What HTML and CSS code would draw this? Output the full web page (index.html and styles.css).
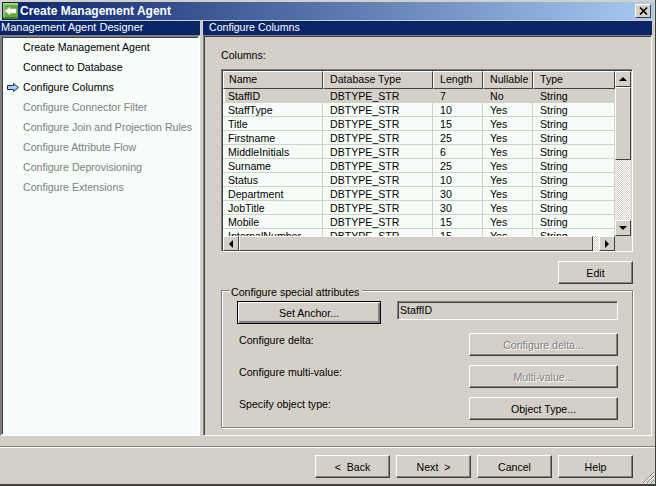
FILE: index.html
```html
<!DOCTYPE html>
<html lang="en">
<head>
    <meta charset="UTF-8">
    <title>Create Management Agent</title>
    <link rel="stylesheet" href="styles.css">
</head>
<body>
    <div class="window">
        <div class="titlebar">
            <svg class="app-icon" width="15" height="16" viewBox="0 0 15 16">
                <rect x="0" y="0" width="15" height="16" fill="#62a83f"/>
                <rect x="0" y="0" width="15" height="2" fill="#a3d585"/>
                <rect x="0" y="2" width="2" height="14" fill="#8cc76c"/>
                <rect x="0" y="14" width="15" height="2" fill="#3f8129"/>
                <path d="M2 8 L7 4 V6 H13 V10 H7 V12 Z" fill="#ffffff" stroke="#d5ecc8" stroke-width="0.5"/>
            </svg>
            <span class="title-text">Create Management Agent</span>
            <div class="close-btn">
                <svg width="9" height="8" viewBox="0 0 9 8"><path d="M1 0.5 L8 7.5 M8 0.5 L1 7.5" stroke="#000" stroke-width="1.6"/></svg>
            </div>
        </div>

        <div class="main">
            <div class="side">
                <div class="heading side-heading">Management Agent Designer</div>
                <ul class="steps">
                    <li>Create Management Agent</li>
                    <li>Connect to Database</li>
                    <li class="current">
                        <svg class="arrow" width="12" height="9" viewBox="0 0 12 9">
                            <path d="M0.5 2.5 H6.5 V0.5 L11.5 4.5 L6.5 8.5 V6.5 H0.5 Z" fill="#a9cdf2" stroke="#10305a" stroke-width="1"/>
                        </svg>
                        Configure Columns
                    </li>
                    <li class="off">Configure Connector Filter</li>
                    <li class="off">Configure Join and Projection Rules</li>
                    <li class="off">Configure Attribute Flow</li>
                    <li class="off">Configure Deprovisioning</li>
                    <li class="off">Configure Extensions</li>
                </ul>
            </div>

            <div class="content">
                <div class="heading content-heading">Configure Columns</div>
                <div class="page">
                    <div class="columns-label">Columns:</div>
                    <div class="list-frame">
                        <div class="list-top">
                            <div class="list-view">
                                <div class="row head">
                                    <div class="col-name">Name</div>
                                    <div class="col-db">Database Type</div>
                                    <div class="col-len">Length</div>
                                    <div class="col-null">Nullable</div>
                                    <div class="col-type">Type</div>
                                </div>
                                <div class="row selected"><div class="col-name">StaffID</div><div class="col-db">DBTYPE_STR</div><div class="col-len">7</div><div class="col-null">No</div><div class="col-type">String</div></div>
                                <div class="row"><div class="col-name">StaffType</div><div class="col-db">DBTYPE_STR</div><div class="col-len">10</div><div class="col-null">Yes</div><div class="col-type">String</div></div>
                                <div class="row"><div class="col-name">Title</div><div class="col-db">DBTYPE_STR</div><div class="col-len">15</div><div class="col-null">Yes</div><div class="col-type">String</div></div>
                                <div class="row"><div class="col-name">Firstname</div><div class="col-db">DBTYPE_STR</div><div class="col-len">25</div><div class="col-null">Yes</div><div class="col-type">String</div></div>
                                <div class="row"><div class="col-name">MiddleInitials</div><div class="col-db">DBTYPE_STR</div><div class="col-len">6</div><div class="col-null">Yes</div><div class="col-type">String</div></div>
                                <div class="row"><div class="col-name">Surname</div><div class="col-db">DBTYPE_STR</div><div class="col-len">25</div><div class="col-null">Yes</div><div class="col-type">String</div></div>
                                <div class="row"><div class="col-name">Status</div><div class="col-db">DBTYPE_STR</div><div class="col-len">10</div><div class="col-null">Yes</div><div class="col-type">String</div></div>
                                <div class="row"><div class="col-name">Department</div><div class="col-db">DBTYPE_STR</div><div class="col-len">30</div><div class="col-null">Yes</div><div class="col-type">String</div></div>
                                <div class="row"><div class="col-name">JobTitle</div><div class="col-db">DBTYPE_STR</div><div class="col-len">30</div><div class="col-null">Yes</div><div class="col-type">String</div></div>
                                <div class="row"><div class="col-name">Mobile</div><div class="col-db">DBTYPE_STR</div><div class="col-len">15</div><div class="col-null">Yes</div><div class="col-type">String</div></div>
                                <div class="row"><div class="col-name">InternalNumber</div><div class="col-db">DBTYPE_STR</div><div class="col-len">15</div><div class="col-null">Yes</div><div class="col-type">String</div></div>
                            </div>
                            <div class="vscroll">
                                <div class="sb-btn"><span class="tri-up"></span></div>
                                <div class="v-thumb"></div>
                                <div class="v-track"></div>
                                <div class="sb-btn"><span class="tri-down"></span></div>
                            </div>
                        </div>
                        <div class="hscroll">
                            <div class="sb-btn"><span class="tri-left"></span></div>
                            <div class="h-thumb"></div>
                            <div class="h-track"></div>
                            <div class="sb-btn"><span class="tri-right"></span></div>
                        </div>
                    </div>
                    <div class="edit-row"><button class="btn">Edit</button></div>

                    <div class="group">
                        <div class="legend">Configure special attributes</div>
                        <div class="anchor-row">
                            <button class="btn anchor">Set Anchor...</button>
                            <div class="anchor-value">StaffID</div>
                        </div>
                        <div class="attr-row">
                            <span>Configure delta:</span>
                            <button class="btn wide disabled">Configure delta...</button>
                        </div>
                        <div class="attr-row">
                            <span>Configure multi-value:</span>
                            <button class="btn wide disabled">Multi-value...</button>
                        </div>
                        <div class="attr-row">
                            <span>Specify object type:</span>
                            <button class="btn wide">Object Type...</button>
                        </div>
                    </div>
                </div>
            </div>
        </div>

        <div class="footer">
            <button class="btn">&lt;&nbsp; Back</button>
            <button class="btn">Next &nbsp;&gt;</button>
            <button class="btn">Cancel</button>
            <button class="btn">Help</button>
        </div>
        <svg class="grip" width="13" height="13" viewBox="0 0 13 13">
            <path d="M12 1 L1 12 M12 5 L5 12 M12 9 L9 12" stroke="#808080" stroke-width="1"/>
            <path d="M12 2 L2 12 M12 6 L6 12 M12 10 L10 12" stroke="#ffffff" stroke-width="1"/>
        </svg>
    </div>
</body>
</html>
```

FILE: styles.css
```css
* {
    box-sizing: border-box;
}

html, body {
    margin: 0;
    padding: 0;
}

body {
    width: 656px;
    height: 486px;
    overflow: hidden;
    font-family: "Liberation Sans", Arial, sans-serif;
    font-size: 10.6px;
    color: #000;
    background-color: #d4d0c8;
}

.window {
    position: relative;
    width: 656px;
    height: 486px;
    display: flex;
    flex-direction: column;
    padding: 2px 0 0 0;
    background-color: #d4d0c8;
    border-bottom: 2px solid #404040;
    border-right: 1px solid #404040;
}

.titlebar {
    height: 18px;
    margin: 0 1px 0 2px;
    display: flex;
    align-items: center;
    padding-left: 1px;
    color: #fff;
    font-size: 12px;
    font-weight: bold;
    background: linear-gradient(to right, #0a246a, #a6caf0);
}

.app-icon {
    margin-right: 2px;
}

.title-text {
    flex: 1;
}

.close-btn {
    width: 16px;
    height: 14px;
    margin-right: 3px;
    display: flex;
    align-items: center;
    justify-content: center;
    background-color: #d4d0c8;
    border: 1px solid;
    border-color: #fff #404040 #404040 #fff;
}

.main {
    display: flex;
    margin-top: 1px;
    gap: 3px;
    height: 415px;
}

.heading {
    height: 14px;
    line-height: 13px;
    background-color: #0a246a;
    color: #fff;
}

.side-heading {
    font-size: 11px;
    padding-left: 1px;
}

.content-heading {
    padding-left: 6px;
}

.side {
    width: 200px;
    display: flex;
    flex-direction: column;
}

.steps {
    flex: 1;
    list-style: none;
    margin: 0;
    padding: 0 0 0 21px;
    background-color: #f6fcf8;
    border: 2px solid;
    border-color: #808080 #fff #fff #808080;
    box-shadow: inset 1px 1px 0 #404040;
}

.steps li {
    position: relative;
    height: 20px;
    line-height: 20px;
    white-space: nowrap;
}

.steps li.off {
    color: #808080;
}

.arrow {
    position: absolute;
    left: -16px;
    top: 6px;
}

.content {
    width: 449px;
    display: flex;
    flex-direction: column;
}

.page {
    flex: 1;
    padding: 13px 18px 0 17px;
    border: 1px solid;
    border-color: #808080 #fff #fff #808080;
    box-shadow: inset 1px 1px 0 #404040;
}

.columns-label {
    height: 20px;
    line-height: 13px;
}

.list-frame {
    height: 183px;
    border: 1px solid;
    border-color: #808080 #fff #fff #808080;
}

.list-top {
    display: flex;
    height: 166px;
    padding-right: 1px;
    border-top: 1px solid #404040;
}

.list-view {
    flex: 1;
    min-width: 0;
    overflow: hidden;
    background-color: #f6fcf8;
    border-left: 1px solid #404040;
}

.row {
    display: flex;
    height: 14px;
    line-height: 15px;
    border-bottom: 1px solid #d4d0c8;
}

.row > div {
    padding-left: 7px;
    border-right: 1px solid #d4d0c8;
    white-space: nowrap;
}

.row > .col-name {
    padding-left: 5px;
}

.row.head {
    height: 18px;
    line-height: 15px;
    background-color: #d4d0c8;
    border-bottom: 0;
}

.row.head > div {
    border: 1px solid;
    border-color: #fff #404040 #404040 #fff;
    padding-left: 6px;
}

.row.head > .col-name {
    padding-left: 5px;
}

.row.selected {
    background-color: #d4d0c8;
}

.row.selected .col-name {
    box-shadow: inset 2px 0 0 #f6fcf8;
}

.col-name { width: 100px; }
.col-db { width: 110px; }
.col-len { width: 50px; }
.col-null { width: 50px; }
.col-type { flex: 1; }

.hscroll {
    display: flex;
    height: 15px;
    margin-right: 17px;
    border-left: 1px solid #404040;
}

.vscroll {
    width: 16px;
    display: flex;
    flex-direction: column;
}

.sb-btn {
    width: 16px;
    height: 16px;
    flex: none;
    display: flex;
    align-items: center;
    justify-content: center;
    background-color: #d4d0c8;
    border: 1px solid;
    border-color: #fff #404040 #404040 #fff;
}

.hscroll .sb-btn {
    height: 15px;
}

.h-thumb {
    flex: 1;
    background-color: #d4d0c8;
    border: 1px solid;
    border-color: #fff #404040 #404040 #fff;
}

.h-track {
    width: 6px;
    background: repeating-conic-gradient(#fff 0 25%, #d4d0c8 0 50%) 0 0 / 2px 2px;
}

.v-thumb {
    height: 73px;
    background-color: #d4d0c8;
    border: 1px solid;
    border-color: #fff #404040 #404040 #fff;
}

.v-track {
    flex: 1;
    background: repeating-conic-gradient(#fff 0 25%, #d4d0c8 0 50%) 0 0 / 2px 2px;
}

.tri-up, .tri-down, .tri-left, .tri-right {
    width: 0;
    height: 0;
    border-style: solid;
    border-color: transparent;
}

.tri-up { border-width: 0 4px 4px 4px; border-bottom-color: #000; }
.tri-down { border-width: 4px 4px 0 4px; border-top-color: #000; }
.tri-left { border-width: 4px 4px 4px 0; border-right-color: #000; }
.tri-right { border-width: 4px 0 4px 4px; border-left-color: #000; }

.edit-row {
    display: flex;
    justify-content: flex-end;
    margin-top: 9px;
}

.btn {
    width: 75px;
    height: 23px;
    padding: 0;
    font: inherit;
    color: #000;
    background-color: #d4d0c8;
    border: 1px solid;
    border-color: #fff #404040 #404040 #fff;
    box-shadow: inset -1px -1px 0 #808080;
}

.btn.wide {
    width: 149px;
}

.btn.disabled {
    color: #808080;
    text-shadow: 1px 1px 0 #fff;
}

.btn.anchor {
    width: 144px;
    border: 1px solid #000;
    box-shadow: inset 1px 1px 0 #fff, inset -2px -2px 0 #808080;
}

.group {
    position: relative;
    height: 138px;
    margin-top: 6px;
    padding: 10px 14px 0 15px;
    border: 1px solid #808080;
    box-shadow: 1px 1px 0 #fff, inset 1px 1px 0 #fff;
}

.legend {
    position: absolute;
    left: 8px;
    top: -5px;
    padding: 0 3px 0 1px;
    line-height: 13px;
    background-color: #d4d0c8;
}

.anchor-row {
    display: flex;
    justify-content: space-between;
    height: 23px;
}

.anchor-value {
    width: 221px;
    height: 19px;
    line-height: 17px;
    padding-left: 2px;
    border: 1px solid;
    border-color: #808080 #fff #fff #808080;
    box-shadow: inset 1px 1px 0 #404040;
}

.attr-row {
    display: flex;
    justify-content: space-between;
    margin-top: 9px;
    height: 23px;
    padding-left: 2px;
    line-height: 14px;
}

.footer {
    display: flex;
    justify-content: flex-end;
    gap: 6px;
    margin-top: 10px;
    padding: 8px 22px 0 0;
    border-top: 1px solid #808080;
    box-shadow: inset 0 1px 0 #fff;
}

.grip {
    position: absolute;
    right: 0;
    bottom: 0;
}
```
